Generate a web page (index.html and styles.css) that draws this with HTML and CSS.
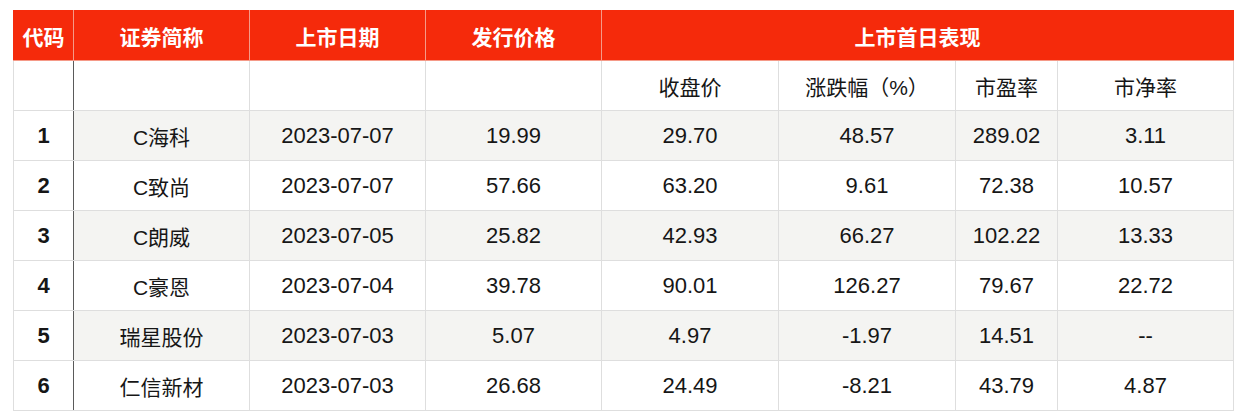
FILE: index.html
```html
<!DOCTYPE html>
<html lang="zh-CN">
<head>
<meta charset="utf-8">
<title>上市首日表现</title>
<link rel="stylesheet" href="styles.css">
</head>
<body>
<div class="wrap">
<table class="ipo">
  <colgroup>
    <col class="c-code">
    <col class="c-wide">
    <col class="c-wide">
    <col class="c-wide">
    <col class="c-wide2">
    <col class="c-wide2">
    <col class="c-narrow">
    <col class="c-last">
  </colgroup>
  <thead>
    <tr class="head">
      <th>代码</th>
      <th>证券简称</th>
      <th>上市日期</th>
      <th>发行价格</th>
      <th colspan="4">上市首日表现</th>
    </tr>
    <tr class="sub">
      <td class="code"></td>
      <td></td>
      <td></td>
      <td></td>
      <td>收盘价</td>
      <td>涨跌幅（%）</td>
      <td>市盈率</td>
      <td>市净率</td>
    </tr>
  </thead>
  <tbody>
    <tr class="alt">
      <td class="code">1</td><td class="name">C海科</td><td>2023-07-07</td><td>19.99</td><td>29.70</td><td>48.57</td><td>289.02</td><td>3.11</td>
    </tr>
    <tr>
      <td class="code">2</td><td class="name">C致尚</td><td>2023-07-07</td><td>57.66</td><td>63.20</td><td>9.61</td><td>72.38</td><td>10.57</td>
    </tr>
    <tr class="alt">
      <td class="code">3</td><td class="name">C朗威</td><td>2023-07-05</td><td>25.82</td><td>42.93</td><td>66.27</td><td>102.22</td><td>13.33</td>
    </tr>
    <tr>
      <td class="code">4</td><td class="name">C豪恩</td><td>2023-07-04</td><td>39.78</td><td>90.01</td><td>126.27</td><td>79.67</td><td>22.72</td>
    </tr>
    <tr class="alt">
      <td class="code">5</td><td class="name">瑞星股份</td><td>2023-07-03</td><td>5.07</td><td>4.97</td><td>-1.97</td><td>14.51</td><td>--</td>
    </tr>
    <tr>
      <td class="code">6</td><td class="name">仁信新材</td><td>2023-07-03</td><td>26.68</td><td>24.49</td><td>-8.21</td><td>43.79</td><td>4.87</td>
    </tr>
  </tbody>
</table>
</div>
</body>
</html>
```

FILE: styles.css
```css
html, body {
  margin: 0;
  padding: 0;
  background: #ffffff;
}

.wrap {
  padding: 10px 0 0 13px;
}

.ipo {
  border-collapse: collapse;
  table-layout: fixed;
  width: 1220px;
  font-family: "Liberation Sans", "Noto Sans CJK SC", sans-serif;
  font-size: 21px;
  color: #161616;
}

.c-code { width: 60px; }
.c-wide { width: 176px; }
.c-wide2 { width: 177px; }
.c-narrow { width: 102px; }
.c-last { width: 176px; }

.ipo th,
.ipo td {
  height: 50px;
  padding: 0;
  text-align: center;
  vertical-align: middle;
  box-sizing: border-box;
  border: 1px solid #dedede;
  white-space: nowrap;
}

.ipo tbody td {
  font-size: 22px;
}

.ipo tbody td.name {
  font-size: 21px;
}

.head th {
  background: #f52a0b;
  color: #ffffff;
  font-weight: 700;
  border-color: #f59a88;
  border-top-color: #f52a0b;
}

.head th:first-child {
  border-left-color: #f52a0b;
}

.head th:last-child {
  border-right-color: #f52a0b;
}

.ipo td.code {
  font-weight: 700;
  background: #ffffff;
  border-right: 1px solid #5a5a5a;
}

.alt td {
  background: #f4f4f2;
}
```
